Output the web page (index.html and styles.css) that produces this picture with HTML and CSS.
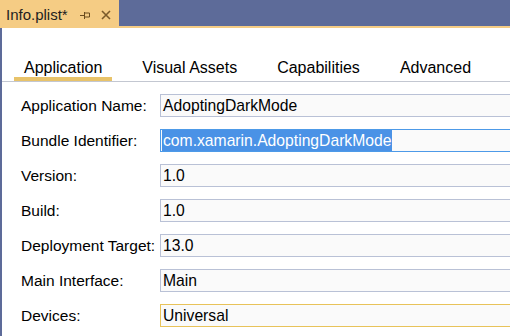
FILE: index.html
```html
<!DOCTYPE html>
<html lang="en">
<head>
    <meta charset="UTF-8">
    <meta name="viewport" content="width=device-width, initial-scale=1.0">
    <title>Info.plist</title>
    <link rel="stylesheet" href="styles.css">
</head>
<body>
    <div class="doc-strip">
        <div class="doc-tab">
            <span class="doc-name">Info.plist*</span>
            <svg class="pin" width="12" height="10" viewBox="0 0 12 10">
                <path d="M1 5.5h4M5.5 2v7M5.5 3h5v4h-5" fill="none" stroke="#6b4c1f" stroke-width="1"/>
            </svg>
            <svg class="close" width="10" height="10" viewBox="0 0 10 10">
                <path d="M1 1l8 8M9 1l-8 8" stroke="#7a5a2a" stroke-width="1.6"/>
            </svg>
        </div>
    </div>
    <div class="doc-rule"></div>

    <div class="editor">
        <!-- page tabs -->
        <div class="tabs">
            <div class="tab active">Application</div>
            <div class="tab">Visual Assets</div>
            <div class="tab">Capabilities</div>
            <div class="tab">Advanced</div>
        </div>

        <div class="form">
            <div class="row">
                <div class="label">Application Name:</div>
                <div class="field">AdoptingDarkMode</div>
            </div>
            <div class="row">
                <div class="label">Bundle Identifier:</div>
                <div class="field focus"><span class="sel">com.xamarin.AdoptingDarkMode</span></div>
            </div>
            <div class="row">
                <div class="label">Version:</div>
                <div class="field">1.0</div>
            </div>
            <div class="row">
                <div class="label">Build:</div>
                <div class="field">1.0</div>
            </div>
            <div class="row">
                <div class="label">Deployment Target:</div>
                <div class="field">13.0</div>
            </div>
            <div class="row">
                <div class="label">Main Interface:</div>
                <div class="field">Main</div>
            </div>
            <div class="row">
                <div class="label">Devices:</div>
                <div class="field hover">Universal</div>
            </div>
        </div>
    </div>
</body>
</html>
```

FILE: styles.css
```css
*{ margin: 0; padding: 0; box-sizing: border-box;}
html, body{ height: 100%;}
body{ overflow: hidden; background: #fff; color: #000; font-family: "Liberation Sans", Arial, sans-serif; font-size: 15.5px;}

.doc-strip{ height: 26px; background: #5d6b99; display: flex;}
.doc-tab{ width: 119px; background: #f5cc84; display: flex; align-items: center; padding-left: 6px; padding-top: 3px;}
.doc-name{ font-size: 15px; color: #1e1e1e;}
.pin{ margin-left: 11px;}
.close{ margin-left: 10px;}
.doc-rule{ height: 2px; background: #f5cc84;}

.editor{ height: calc(100% - 28px); border-left: 2px solid #5d6b99; overflow: hidden;}

.tabs{ display: flex; gap: 20px; padding: 31px 0 0 12px; border-bottom: 1px solid #c3c7d1;}
.tab{ padding: 0 10px; line-height: 18px; border-bottom: 4px solid transparent; font-size: 16px;}
.tab.active{ border-bottom-color: #e8c36a;}

.form{ padding: 12px 0 0 19px; display: flex; flex-direction: column; gap: 12px;}
.row{ display: flex; align-items: center;}
.label{ width: 139px; flex: none;}
.field{ flex: none; width: 380px; height: 23px; line-height: 21px; padding-left: 2px; font-size: 15.7px; background: #fafafa; border: 1px solid #b9c1d6; white-space: nowrap;}
.field.focus{ border-color: #4d9ae8; padding-left: 1px;}
.field.hover{ border-color: #e8c35a;}
.sel{ display: inline-block; background: #4a92e6; color: #fff; padding: 0 1px;}
```
